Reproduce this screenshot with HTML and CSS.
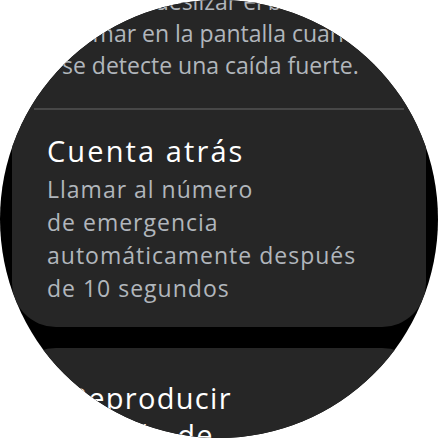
FILE: index.html
```html
<!DOCTYPE html>
<html lang="es">
<head>
<meta charset="utf-8">
<title>Detección de caídas</title>
<link rel="stylesheet" href="styles.css">
</head>
<body>
<div class="screen">
  <div class="scroll">
    <section class="card card-top">
      <p class="desc desc-prev">Pulsar o deslizar el botón<br>Llamar en la pantalla cuando<br>se detecte una caída fuerte.</p>
      <div class="divider"></div>
      <div class="item">
        <h2 class="title">Cuenta atrás</h2>
        <p class="desc">Llamar al número<br>de emergencia<br>automáticamente después<br>de 10 segundos</p>
      </div>
    </section>
    <section class="card card-next">
      <h2 class="title title-next">Reproducir<br>sonido de<br>alarma</h2>
    </section>
  </div>
</div>
</body>
</html>
```
FILE: styles.css
```css
html, body {
  margin: 0;
  padding: 0;
  background: #ffffff;
}
body {
  font-family: "Open Sans", "Noto Sans", sans-serif;
}
.screen {
  width: 438px;
  height: 438px;
  border-radius: 50%;
  overflow: hidden;
  background: #000000;
}
.scroll {
  display: flex;
  flex-direction: column;
  gap: 21px;
  margin-top: -40px;
}
.card {
  margin: 0 12px;
  background: #262626;
}
.card-top {
  border-radius: 0 0 44px 44px;
  padding: 25px 0 22px;
}
.card-next {
  border-radius: 44px 44px 0 0;
  padding: 31px 0 40px 57px;
}
.desc {
  margin: 0;
  font-size: 23px;
  line-height: 33px;
  letter-spacing: 1px;
  color: #b1b6bc;
}
.desc-prev {
  line-height: 32px;
  letter-spacing: 0;
  padding-left: 50px;
}
.divider {
  height: 2px;
  margin: 27px 22px 0;
  background: #474747;
}
.item {
  padding: 23px 0 0 35px;
}
.title {
  margin: 0 0 4px;
  font-size: 29px;
  line-height: 36px;
  font-weight: 400;
  letter-spacing: 2.1px;
  color: #ffffff;
}
.title-next {
  margin: 0;
  line-height: 37px;
  letter-spacing: 1.3px;
}
```
